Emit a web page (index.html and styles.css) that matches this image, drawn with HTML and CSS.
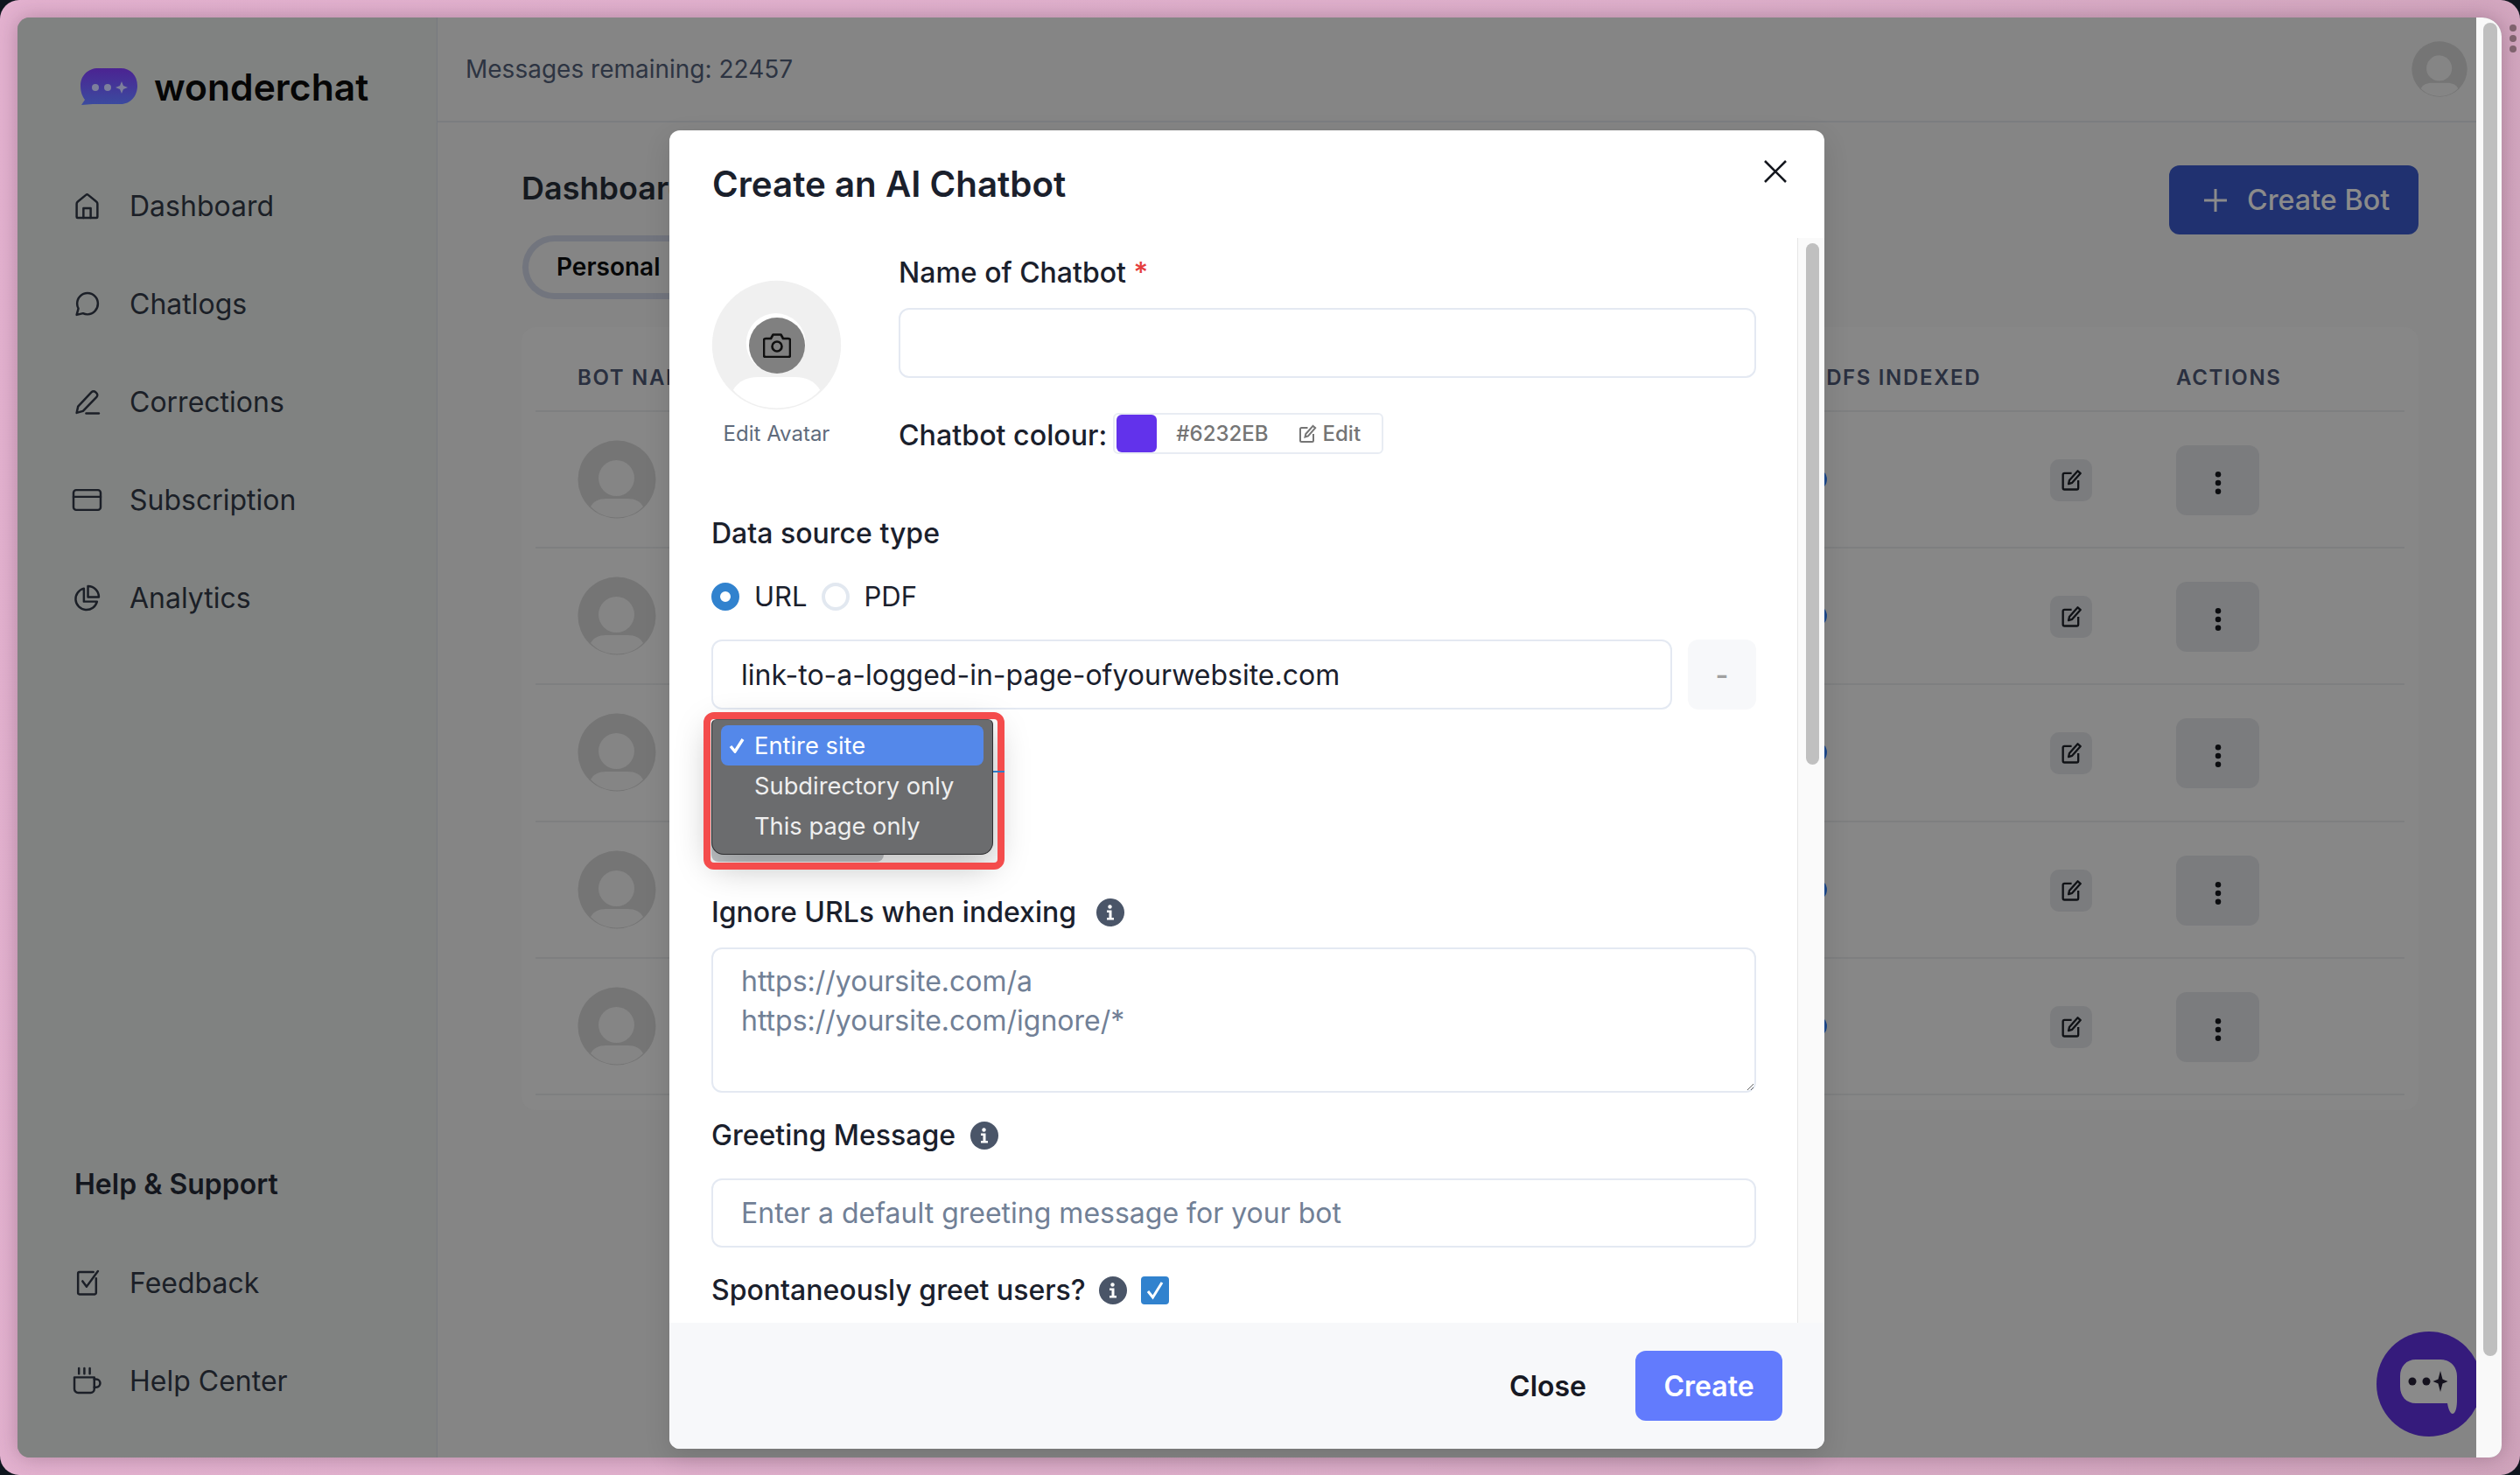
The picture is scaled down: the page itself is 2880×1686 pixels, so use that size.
FILE: index.html
```html
<!DOCTYPE html>
<html lang="en">
<head>
  <meta charset="UTF-8">
  <meta name="viewport" content="width=device-width, initial-scale=1.0">
  <title>wonderchat - Dashboard</title>
  <link rel="stylesheet" href="styles.css">
</head>
<body>
  <svg class="sprites" aria-hidden="true">
    <symbol id="person" viewBox="0 0 90 90">
      <circle class="person-bg" cx="45" cy="45" r="44.5"/>
      <circle class="person-fg" cx="44.5" cy="43.5" r="20.5"/>
      <path class="person-fg" d="M15 76c3-6 10-9 17-9h26c7 0 14 3 17 9-7 8-18 12.500-30 12.500S22 84 15 76z"/>
    </symbol>
    <symbol id="edit" viewBox="0 0 24 24">
      <path d="M12.500 5H5.500A1.500 1.500 0 0 0 4 6.500v13A1.500 1.500 0 0 0 5.500 21h12a1.500 1.500 0 0 0 1.500-1.500V12"/>
      <path d="M9.500 15.500l.8-3.500L18.500 2.800l2.700 2.400-8.200 9.200z"/>
    </symbol>
    <symbol id="kebab" viewBox="0 0 24 24">
      <circle cx="12" cy="3" r="3"/>
      <circle cx="12" cy="12" r="3"/>
      <circle cx="12" cy="21" r="3"/>
    </symbol>
    <symbol id="info" viewBox="0 0 32 32">
      <circle cx="16" cy="16" r="16"/>
      <circle class="info-mark" cx="15.500" cy="9.500" r="2.200"/>
      <path class="info-mark" d="M12 13.500h5.500v8.500H20v2.500h-8V22h2.500v-6H12z"/>
    </symbol>
  </svg>

  <div class="desk">
    <div class="window">
      <aside class="sidebar">
        <div class="brand">
          <svg class="brand-mark" viewBox="0 0 65 42">
            <defs>
              <linearGradient id="brandfill" x1="0" y1="0" x2="0" y2="1">
                <stop offset="0" stop-color="#4b2392"/>
                <stop offset="1" stop-color="#3b4b9f"/>
              </linearGradient>
            </defs>
            <path fill="url(#brandfill)" d="M20 0h26c11 0 19 8 19 20s-8 21-19 21H14l-13 1 4-6C2 32 0 27 0 20 0 8 9 0 20 0z"/>
            <circle class="brand-dot" cx="17" cy="22" r="4"/>
            <circle class="brand-dot" cx="31" cy="22" r="4"/>
            <path class="brand-dot" d="M47 15l2 5 5 2-5 2-2 5-2-5-5-2 5-2z"/>
          </svg>
          <span class="brand-name">wonderchat</span>
        </div>
        <nav class="nav">
          <a class="nav-item">
            <svg class="nav-icon" viewBox="0 0 30 30"><path d="M3.500 27V12.500c0-1 .4-1.800 1.200-2.400l9-7.300a2 2 0 0 1 2.600 0l9 7.300c.8.600 1.200 1.400 1.200 2.400V27a1 1 0 0 1-1 1h-21a1 1 0 0 1-1-1z"/><path d="M11 28V17.500h8V28"/></svg>
            Dashboard
          </a>
          <a class="nav-item">
            <svg class="nav-icon" viewBox="0 0 30 30"><path d="M15.500 3C9 3 4 8 4 14.500c0 2 .5 4 1.400 5.500L3.500 27l7-1.700c1.500.8 3.200 1.200 5 1.200C22 26.500 27 21 27 14.500S22 3 15.500 3z"/></svg>
            Chatlogs
          </a>
          <a class="nav-item">
            <svg class="nav-icon" viewBox="0 0 30 30"><path d="M3.500 27l1.500-7L20 4a3 3 0 0 1 4.300 0l1.200 1.200a3 3 0 0 1 0 4.300L10.500 25z"/><path d="M14 27.500h14"/></svg>
            Corrections
          </a>
          <a class="nav-item">
            <svg class="nav-icon" viewBox="0 0 30 30"><rect x="0" y="4" width="30" height="22" rx="3"/><path d="M0 11.500h30"/></svg>
            Subscription
          </a>
          <a class="nav-item">
            <svg class="nav-icon" viewBox="0 0 30 30"><path d="M11.500 4.500a12 12 0 1 0 14.500 14.500H11.500z"/><path d="M16 2a12 12 0 0 1 12 12H16z"/></svg>
            Analytics
          </a>
        </nav>
        <div class="help">
          <h3 class="help-title">Help &amp; Support</h3>
          <a class="nav-item">
            <svg class="nav-icon" viewBox="0 0 30 30"><path d="M25 10v16a1.500 1.500 0 0 1-1.500 1.500h-17A1.500 1.500 0 0 1 5 26V4.500A1.500 1.500 0 0 1 6.500 3H22"/><path d="M10 13l4.500 6L27 2"/></svg>
            Feedback
          </a>
          <a class="nav-item">
            <svg class="nav-icon" viewBox="0 0 30 30"><path d="M1 11h22v13a4 4 0 0 1-4 4H5a4 4 0 0 1-4-4z"/><path d="M23 13h2a4 4 0 0 1 0 9h-2"/><path d="M6 1v6M12 1v6M18 1v6"/></svg>
            Help Center
          </a>
        </div>
      </aside>

      <main class="main">
        <header class="topbar">
          <span class="messages">Messages remaining: 22457</span>
          <svg class="top-avatar"><use href="#person"/></svg>
        </header>
        <section class="page">
          <div class="page-head">
            <h1 class="page-title">Dashboard</h1>
            <button class="create-bot">
              <svg class="plus" viewBox="0 0 28 28"><path d="M14 1v26M1 14h26"/></svg>
              Create Bot
            </button>
          </div>
          <div class="tab">Personal</div>
          <div class="bots">
            <div class="bots-row bots-head">
              <span class="col-name">BOT NAME</span>
              <span class="col-pdfs">PDFS INDEXED</span>
              <span></span>
              <span>ACTIONS</span>
            </div>
            <div class="bots-row">
              <svg class="bot-avatar"><use href="#person"/></svg>
              <span class="indexed-dot"></span>
              <button class="edit-btn"><svg class="edit-icon"><use href="#edit"/></svg></button>
              <button class="more-btn"><svg class="kebab"><use href="#kebab"/></svg></button>
            </div>
            <div class="bots-row">
              <svg class="bot-avatar"><use href="#person"/></svg>
              <span class="indexed-dot"></span>
              <button class="edit-btn"><svg class="edit-icon"><use href="#edit"/></svg></button>
              <button class="more-btn"><svg class="kebab"><use href="#kebab"/></svg></button>
            </div>
            <div class="bots-row">
              <svg class="bot-avatar"><use href="#person"/></svg>
              <span class="indexed-dot"></span>
              <button class="edit-btn"><svg class="edit-icon"><use href="#edit"/></svg></button>
              <button class="more-btn"><svg class="kebab"><use href="#kebab"/></svg></button>
            </div>
            <div class="bots-row">
              <svg class="bot-avatar"><use href="#person"/></svg>
              <span class="indexed-dot"></span>
              <button class="edit-btn"><svg class="edit-icon"><use href="#edit"/></svg></button>
              <button class="more-btn"><svg class="kebab"><use href="#kebab"/></svg></button>
            </div>
            <div class="bots-row">
              <svg class="bot-avatar"><use href="#person"/></svg>
              <span class="indexed-dot"></span>
              <button class="edit-btn"><svg class="edit-icon"><use href="#edit"/></svg></button>
              <button class="more-btn"><svg class="kebab"><use href="#kebab"/></svg></button>
            </div>
          </div>
        </section>
        <div class="chat-launcher">
          <svg class="chat-bubble" viewBox="0 0 66 62">
            <path class="chat-shape" d="M18 0h28c11 0 19 8 19 19v28c0 5-1 15-5 15-3 0-5-6-6-12H18C7 50 0 42 0 31V19C0 8 7 0 18 0z"/>
            <circle cx="14" cy="25" r="4.500"/>
            <circle cx="30" cy="25" r="4.500"/>
            <path d="M46 13l2.500 9.500 6 2.500-6 2.500L46 37l-2.500-9.500-6-2.500 6-2.500z"/>
          </svg>
        </div>
      </main>

      <div class="page-track"><div class="page-thumb"></div></div>
    </div>

    <div class="dots"><span></span><span></span><span></span></div>

    <div class="modal">
      <div class="modal-head">
        <h2 class="modal-title">Create an AI Chatbot</h2>
        <svg class="modal-close" viewBox="0 0 26 26"><path d="M1 1l24 24M25 1L1 25"/></svg>
      </div>
      <div class="modal-body">
        <div class="modal-content">
          <div class="profile">
            <div class="avatar-col">
              <div class="avatar-edit">
                <svg class="avatar-person"><use href="#person"/></svg>
                <div class="avatar-camera">
                  <svg class="camera" viewBox="0 0 32 28"><path d="M3 6h6l2.500-4.500h9L23 6h6a2 2 0 0 1 2 2v17a2 2 0 0 1-2 2H3a2 2 0 0 1-2-2V8a2 2 0 0 1 2-2z"/><circle cx="16" cy="15" r="5.500"/></svg>
                </div>
              </div>
              <span class="avatar-label">Edit Avatar</span>
            </div>
            <div class="profile-fields">
              <label class="field-label">Name of Chatbot <span class="required">*</span></label>
              <input class="text-input" type="text">
              <div class="colour-row">
                <span class="colour-label">Chatbot colour:</span>
                <div class="colour-box">
                  <span class="colour-swatch"></span>
                  <span class="colour-hex">#6232EB</span>
                  <span class="colour-edit">
                    <svg class="colour-edit-icon"><use href="#edit"/></svg>
                    Edit
                  </span>
                </div>
              </div>
            </div>
          </div>

          <label class="field-label source-label">Data source type</label>
          <div class="radios">
            <span class="radio radio-on"></span><span class="radio-text">URL</span>
            <span class="radio"></span><span class="radio-text">PDF</span>
          </div>
          <div class="url-row">
            <input class="text-input" type="text" value="link-to-a-logged-in-page-ofyourwebsite.com">
            <button class="minus-btn">-</button>
          </div>

          <div class="scope">
            <div class="scope-select"></div>
            <ul class="scope-menu">
              <li class="scope-item scope-active">
                <svg class="scope-check" viewBox="0 0 18 17"><path d="M2 9l5 6L16 1"/></svg>
                Entire site
              </li>
              <li class="scope-item">Subdirectory only</li>
              <li class="scope-item">This page only</li>
            </ul>
            <div class="scope-mark"></div>
            <span class="scope-tick"></span>
          </div>

          <div class="label-row ignore-label">
            <label class="field-label">Ignore URLs when indexing</label>
            <svg class="info"><use href="#info"/></svg>
          </div>
          <textarea class="text-input text-area" placeholder="https://yoursite.com/a&#10;https://yoursite.com/ignore/*"></textarea>

          <div class="label-row greeting-label">
            <label class="field-label">Greeting Message</label>
            <svg class="info"><use href="#info"/></svg>
          </div>
          <input class="text-input greeting-input" type="text" placeholder="Enter a default greeting message for your bot">

          <div class="label-row spont-label">
            <label class="field-label">Spontaneously greet users?</label>
            <svg class="info"><use href="#info"/></svg>
            <span class="checkbox">
              <svg viewBox="0 0 32 32"><path d="M8 17l5.500 7L24 7"/></svg>
            </span>
          </div>
        </div>
        <div class="modal-track"><div class="modal-thumb"></div></div>
      </div>
      <div class="modal-foot">
        <button class="close-btn">Close</button>
        <button class="submit-btn">Create</button>
      </div>
    </div>
  </div>
</body>
</html>
```

FILE: styles.css
```css
* {
  box-sizing: border-box;
}
html, body {
  margin: 0;
  padding: 0;
  height: 100%;
}
body {
  width: 2880px;
  height: 1686px;
  overflow: hidden;
  background: #10161f;
  font-family: 'Inter', sans-serif;
  color: #1a202c;
}
button {
  font-family: inherit;
  border: none;
  padding: 0;
}
.sprites {
  display: none;
}

/* wallpaper behind the browser window */
.desk {
  position: relative;
  width: 2880px;
  height: 1686px;
  padding: 20px 21px 20px 20px;
  border-radius: 22px;
  background: linear-gradient(100deg, #e4b2d0 0%, #dfb0cc 60%, #d0a4bc 100%);
}
.window {
  display: flex;
  height: 1646px;
  border-radius: 14px 22px 14px 14px;
  overflow: hidden;
  background: #858585;
  box-shadow: 0 0 24px rgba(60, 30, 50, 0.3);
}
.dots {
  position: absolute;
  top: 28px;
  right: 4px;
  display: flex;
  flex-direction: column;
  gap: 4px;
}
.dots span {
  width: 8px;
  height: 8px;
  border-radius: 50%;
  background: #7f636e;
}

/* sidebar */
.sidebar {
  display: flex;
  flex-direction: column;
  flex: 0 0 480px;
  border-right: 1px solid #767a80;
  background: #808281;
  padding-left: 64px;
}
.brand {
  display: flex;
  align-items: center;
  gap: 19px;
  height: 80px;
  margin-top: 39px;
  margin-left: 8px;
}
.brand-mark {
  width: 65px;
  height: 42px;
}
.brand-dot {
  fill: #7d7f9c;
}
.brand-name {
  font-size: 42.600px;
  font-weight: 600;
  color: #060606;
}
.nav {
  margin-top: 40px;
}
.nav-item {
  display: flex;
  align-items: center;
  gap: 33px;
  height: 112px;
  font-size: 32px;
  color: #1b1f27;
}
.nav-icon {
  flex: none;
  width: 31px;
  height: 31px;
  fill: none;
  stroke: #1b1f27;
  stroke-width: 2.400;
  stroke-linecap: round;
  stroke-linejoin: round;
  overflow: visible;
}
.help {
  margin-top: auto;
  padding-bottom: 32px;
}
.help-title {
  margin: 0 0 28px 1px;
  font-size: 32px;
  line-height: 56px;
  font-weight: 600;
  color: #14171e;
}

/* main column */
.main {
  position: relative;
  flex: 1;
  min-width: 0;
  overflow: hidden;
  background: #858585;
}
.topbar {
  display: flex;
  align-items: center;
  justify-content: space-between;
  height: 120px;
  padding: 0 10px 0 32px;
  border-bottom: 2px solid #7b7d80;
}
.messages {
  font-size: 28px;
  color: #2d3442;
}
.top-avatar {
  width: 64px;
  height: 64px;
}
.person-bg {
  fill: var(--person-bg, #757575);
}
.person-fg {
  fill: var(--person-fg, #858585);
}
.page {
  padding: 49px 66px 0 96px;
}
.page-head {
  display: flex;
  justify-content: space-between;
  height: 80px;
}
.page-title {
  margin: 0;
  font-size: 36px;
  line-height: 52px;
  font-weight: 600;
  color: #15191f;
}
.create-bot {
  display: flex;
  align-items: center;
  gap: 22px;
  width: 285px;
  height: 79px;
  padding-left: 39px;
  border-radius: 12px;
  background: #203170;
  color: #8b8b8b;
  font-size: 32.300px;
  font-weight: 500;
}
.plus {
  width: 28px;
  height: 28px;
  fill: none;
  stroke: #8b8b8b;
  stroke-width: 3;
}
.tab {
  width: 240px;
  height: 59px;
  margin: 7px 0 0 8px;
  padding-left: 32px;
  border-radius: 30px;
  box-shadow: 0 0 0 7px #72757e;
  font-size: 28px;
  line-height: 59px;
  font-weight: 600;
  color: #060708;
}
.bots {
  margin-top: 39px;
  padding: 0 16px 17px 16px;
  border-radius: 16px;
  background: #878787;
}
.bots-row {
  display: grid;
  grid-template-columns: 48px 1404px 279px 144px 1fr;
  align-items: center;
  height: 156.200px;
  border-bottom: 2px solid #7e7f80;
}
.bots-row > :first-child {
  grid-column: 2;
}
.bots-head {
  height: 97px;
  padding-top: 20px;
  font-size: 24px;
  font-weight: 600;
  letter-spacing: 1.650px;
  color: #2a3040;
}
.col-pdfs {
  margin-left: 6px;
}
.bot-avatar {
  width: 90px;
  height: 90px;
}
.indexed-dot {
  width: 24px;
  height: 24px;
  border-radius: 50%;
  background: #1d4a8e;
}
.edit-btn {
  display: flex;
  align-items: center;
  justify-content: center;
  width: 48px;
  height: 48px;
  margin-top: 2px;
  border-radius: 10px;
  background: #7b7c7e;
}
.edit-icon {
  width: 28px;
  height: 28px;
  fill: none;
  stroke: #101216;
  stroke-width: 2;
  stroke-linejoin: round;
}
.more-btn {
  display: flex;
  align-items: center;
  justify-content: center;
  width: 95px;
  height: 80px;
  margin-top: 2px;
  border-radius: 12px;
  background: #7b7c7e;
}
.kebab {
  width: 26px;
  height: 26px;
  margin-top: 6px;
  fill: #0c0d10;
}
.chat-launcher {
  position: absolute;
  right: -6px;
  bottom: 24px;
  display: flex;
  align-items: center;
  justify-content: center;
  width: 120px;
  height: 120px;
  border-radius: 50%;
  background: #351b7c;
}
.chat-bubble {
  width: 66px;
  height: 62px;
  margin-top: 6px;
  fill: #15121e;
}
.chat-shape {
  fill: #8a8a8a;
}
.page-track {
  flex: 0 0 29px;
  padding: 6px 5px 0 8px;
  background: #f9f9f9;
}
.page-thumb {
  width: 16px;
  height: 1524px;
  border-radius: 8px;
  background: #bfbfbf;
}

/* modal */
.modal {
  position: absolute;
  top: 149px;
  left: 765px;
  display: flex;
  flex-direction: column;
  width: 1320px;
  height: 1507px;
  border-radius: 12px;
  overflow: hidden;
  background: #fff;
  box-shadow: 0 10px 30px rgba(0, 0, 0, 0.12);
}
.modal-head {
  display: flex;
  justify-content: space-between;
  flex: 0 0 123px;
  padding: 36px 43px 0 49px;
}
.modal-title {
  margin: 0;
  font-size: 40.300px;
  line-height: 52px;
  font-weight: 600;
  color: #1a202c;
}
.modal-close {
  width: 26px;
  height: 26px;
  margin-top: -2px;
  fill: none;
  stroke: #14171e;
  stroke-width: 2.600;
}
.modal-body {
  display: flex;
  flex: 1;
  min-height: 0;
}
.modal-content {
  flex: 1;
  min-width: 0;
  padding: 20px 47px 0 48px;
  overflow: hidden;
}
.modal-track {
  flex: 0 0 30px;
  padding: 6px 6px 0 9px;
  border-left: 1px solid #e6e6e6;
  background: #fafafa;
}
.modal-thumb {
  width: 15px;
  height: 596px;
  border-radius: 8px;
  background: #c0c0c0;
}
.modal-foot {
  display: flex;
  align-items: center;
  justify-content: flex-end;
  gap: 56px;
  flex: 0 0 144px;
  padding-right: 48px;
  background: #f7f8fa;
}
.close-btn {
  background: none;
  font-size: 32px;
  font-weight: 600;
  color: #171923;
}
.submit-btn {
  width: 168px;
  height: 80px;
  border-radius: 12px;
  background: #627bfd;
  font-size: 32px;
  font-weight: 600;
  color: #fff;
}

/* form bits */
.field-label {
  display: block;
  font-size: 32px;
  line-height: 40px;
  font-weight: 500;
  color: #1a202c;
}
.required {
  color: #e53e3e;
}
.text-input {
  display: block;
  width: 100%;
  height: 80px;
  padding: 0 32px;
  border: 2px solid #e4e9f2;
  border-radius: 12px;
  outline: none;
  background: #fff;
  font-family: 'Inter', sans-serif;
  font-size: 32px;
  color: #1a202c;
}
.text-input::placeholder {
  color: #718096;
  opacity: 1;
}
.profile {
  display: flex;
  gap: 65px;
}
.avatar-col {
  display: flex;
  flex-direction: column;
  align-items: center;
  flex: 0 0 149px;
  padding-top: 28px;
}
.avatar-edit {
  position: relative;
  display: flex;
  align-items: center;
  justify-content: center;
  width: 149px;
  height: 149px;
}
.avatar-person {
  position: absolute;
  inset: 0;
  width: 149px;
  height: 149px;
  --person-bg: #f0f0f0;
  --person-fg: #fff;
}
.avatar-camera {
  position: relative;
  display: flex;
  align-items: center;
  justify-content: center;
  width: 64px;
  height: 64px;
  border-radius: 50%;
  background: #808080;
}
.camera {
  width: 32px;
  height: 28px;
  fill: none;
  stroke: #0f0f0f;
  stroke-width: 2.600;
  stroke-linejoin: round;
}
.avatar-label {
  margin-top: 12px;
  font-size: 24px;
  line-height: 30px;
  color: #5f6b7c;
  white-space: nowrap;
}
.profile-fields {
  flex: 1;
  min-width: 0;
}
.profile-fields .field-label {
  margin-bottom: 20px;
}
.colour-row {
  display: flex;
  align-items: center;
  gap: 7px;
  height: 47px;
  margin-top: 40px;
}
.colour-label {
  margin-top: 3px;
  font-size: 32.200px;
  font-weight: 500;
  color: #1a202c;
  white-space: nowrap;
}
.colour-box {
  display: flex;
  align-items: center;
  width: 309px;
  height: 47px;
  padding-left: 2px;
  border: 2px solid #e8ecf3;
  border-radius: 6px;
}
.colour-swatch {
  width: 46px;
  height: 43px;
  border-radius: 6px;
  background: #6232eb;
}
.colour-hex {
  margin-left: 22px;
  font-size: 24px;
  font-weight: 500;
  color: #757575;
}
.colour-edit {
  display: flex;
  align-items: center;
  gap: 6px;
  margin-left: 32px;
  font-size: 24px;
  font-weight: 500;
  color: #757575;
}
.colour-edit-icon {
  width: 24px;
  height: 24px;
  fill: none;
  stroke: #757575;
  stroke-width: 2;
}
.source-label {
  margin-top: 71px;
}
.radios {
  display: flex;
  align-items: center;
  height: 32px;
  margin-top: 36px;
}
.radio {
  width: 32px;
  height: 32px;
  border: 4px solid #e2e8f0;
  border-radius: 50%;
  background: #fff;
}
.radio-on {
  border: 10px solid #3182ce;
}
.radio-text {
  margin: -2px 16px 0 17px;
  font-size: 31px;
  color: #1a202c;
}
.url-row {
  display: flex;
  gap: 18px;
  margin-top: 33px;
}
.minus-btn {
  flex: 0 0 78px;
  height: 80px;
  border-radius: 12px;
  background: #f7f8fa;
  font-size: 32px;
  font-weight: 600;
  color: #a0a0a0;
}

/* scope select, with its open menu and the red mark drawn over it */
.scope {
  position: relative;
  height: 212px;
  padding-top: 20px;
}
.scope-select {
  width: 197px;
  height: 154px;
  border-radius: 0 0 8px 8px;
  background: #c5c8cb;
}
.scope-menu {
  position: absolute;
  top: 11px;
  left: 0;
  width: 322px;
  height: 155px;
  margin: 0;
  padding: 6px 10px;
  list-style: none;
  border: 1.500px solid #2e2e30;
  border-top-color: #55565a;
  border-radius: 6px 6px 14px 14px;
  background: #6b6c6e;
  box-shadow: 0 12px 40px rgba(0, 0, 0, 0.28);
}
.scope-item {
  position: relative;
  height: 46px;
  padding-left: 38px;
  border-radius: 8px;
  font-size: 27.300px;
  line-height: 47px;
  color: #efefef;
}
.scope-active {
  background: #5488ea;
  color: #fff;
}
.scope-check {
  position: absolute;
  left: 9px;
  top: 15px;
  width: 18px;
  height: 17px;
  fill: none;
  stroke: #fff;
  stroke-width: 3.400;
}
.scope-mark {
  position: absolute;
  top: 3px;
  left: -9px;
  width: 344px;
  height: 180px;
  border: 8px solid #f44c4c;
  border-radius: 12px;
}
.scope-tick {
  position: absolute;
  top: 70px;
  left: 322px;
  width: 13px;
  height: 2px;
  background: #2f7cc6;
}
.label-row {
  display: flex;
  align-items: center;
  gap: 23px;
}
.info {
  flex: none;
  width: 32px;
  height: 32px;
  fill: #4a5568;
}
.info-mark {
  fill: #fff;
}
.text-area {
  height: 166px;
  margin-top: 20px;
  padding-top: 14px;
  padding-bottom: 0;
  line-height: 45px;
  resize: vertical;
}
.greeting-label {
  gap: 17px;
  margin-top: 29px;
}
.greeting-input {
  height: 79px;
  margin-top: 29px;
}
.spont-label {
  gap: 15px;
  margin-top: 29px;
}
.checkbox {
  width: 32px;
  height: 32px;
  margin-left: 1px;
  border-radius: 4px;
  background: #3182ce;
}
.checkbox svg {
  display: block;
  width: 32px;
  height: 32px;
  fill: none;
  stroke: #fff;
  stroke-width: 3;
}
```
